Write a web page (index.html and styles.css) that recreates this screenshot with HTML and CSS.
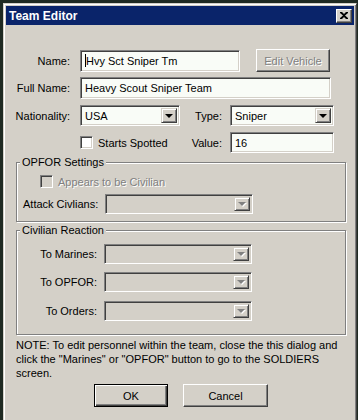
FILE: index.html
```html
<!DOCTYPE html>
<html lang="en">
<head>
    <meta charset="UTF-8">
    <meta name="viewport" content="width=device-width, initial-scale=1.0">
    <title>Team Editor</title>
<link rel="stylesheet" href="styles.css">
</head>
<body>
  <div class="window">
    <div class="titlebar">
      <span class="title">Team Editor</span>
      <span class="close">
        <svg width="8" height="7" viewBox="0 0 8 7"><path d="M0 0h2l2 2 2-2h2v1L5 3.5 8 6v1H6L4 5 2 7H0V6l3-2.5L0 1z" fill="#000"/></svg>
      </span>
    </div>

    <div class="body">
      <div class="row r1">
        <span class="lbl main">Name:</span>
        <div class="field w-name"><span class="caret"></span>Hvy Sct Sniper Tm</div>
        <div class="btn off edit">Edit Vehicle</div>
      </div>

      <div class="row r2">
        <span class="lbl main">Full Name:</span>
        <div class="field w-full">Heavy Scout Sniper Team</div>
      </div>

      <div class="row r3">
        <span class="lbl main">Nationality:</span>
        <div class="combo w-nat"><span class="val">USA</span><span class="arrow"><i></i></span></div>
        <span class="lbl side">Type:</span>
        <div class="combo w-side"><span class="val">Sniper</span><span class="arrow"><i></i></span></div>
      </div>

      <div class="row r4">
        <span class="lbl main"></span>
        <label class="check w-nat"><span class="box"></span>Starts Spotted</label>
        <span class="lbl side">Value:</span>
        <div class="field w-side">16</div>
      </div>

      <fieldset class="group g1">
        <legend>OPFOR Settings</legend>
        <label class="check off"><span class="box"></span>Appears to be Civilian</label>
        <div class="grow attack">
          <span class="glbl">Attack Civlians:</span>
          <div class="combo off w-grp"><span class="val"></span><span class="arrow"><i></i></span></div>
        </div>
      </fieldset>

      <fieldset class="group g2">
        <legend>Civilian Reaction</legend>
        <div class="grow first">
          <span class="glbl right">To Marines:</span>
          <div class="combo off w-grp"><span class="val"></span><span class="arrow"><i></i></span></div>
        </div>
        <div class="grow">
          <span class="glbl right">To OPFOR:</span>
          <div class="combo off w-grp"><span class="val"></span><span class="arrow"><i></i></span></div>
        </div>
        <div class="grow last">
          <span class="glbl right">To Orders:</span>
          <div class="combo off w-grp"><span class="val"></span><span class="arrow"><i></i></span></div>
        </div>
      </fieldset>

      <p class="note">NOTE: To edit personnel within the team, close the this dialog and<br>click the "Marines" or "OPFOR" button to go to the SOLDIERS<br>screen.</p>

      <div class="buttons">
        <div class="btn default ok">OK</div>
        <div class="btn cancel">Cancel</div>
      </div>
    </div>
  </div>
</body>
</html>
```

FILE: styles.css
```css
body {
  margin: 0;
  background: #1f2a22;
  font-family: "Liberation Sans", Arial, sans-serif;
  font-size: 11px;
  color: #000;
  overflow: hidden;
}

/* window frame */
.window {
  margin: 3px 0 0 3px;
  width: 350px;
  height: 430px;
  background: #d4d0c8;
  border: 1px solid;
  border-color: #d4d0c8 #404040 #404040 #d4d0c8;
  box-shadow: inset 1px 1px #fff, inset -1px -1px #808080;
  padding: 1px;
}
.titlebar {
  height: 19px;
  margin: 1px 0 0 1px;
  width: 348px;
  background: #0a246a;
  display: flex;
  align-items: center;
  justify-content: space-between;
}
.title {
  color: #fff;
  font-weight: bold;
  font-size: 12px;
  padding-left: 3px;
}
.close {
  width: 14px;
  height: 12px;
  margin-right: 2px;
  background: #d4d0c8;
  border: 1px solid;
  border-color: #fff #404040 #404040 #fff;
  box-shadow: inset -1px -1px #808080;
  display: flex;
  align-items: center;
  justify-content: center;
}

.body {
  padding-top: 24px;
}

/* form rows */
.row {
  display: flex;
  align-items: center;
}
.r1 { height: 23px; }
.r2 { height: 22px; margin-top: 5px; }
.r3 { height: 21px; margin-top: 6px; }
.r4 { height: 21px; margin-top: 6px; }

.lbl { text-align: right; }
.lbl.main { width: 65px; margin-right: 10px; }
.lbl.side { width: 42px; margin-right: 8px; }

.field, .combo {
  box-sizing: border-box;
  height: 100%;
  border: 1px solid;
  border-color: #808080 #fff #fff #808080;
  box-shadow: inset 1px 1px #404040, inset -1px -1px #d4d0c8;
  background: #f9fcf7;
  display: flex;
  align-items: center;
  padding-left: 4px;
}
.w-name { width: 160px; height: 22px; }
.w-full { width: 251px; }
.w-nat { width: 100px; }
.w-side { width: 104px; }
.w-grp { width: 148px; }

.caret {
  width: 1px;
  height: 13px;
  background: #000;
}

.combo { padding: 2px; }
.combo .val { flex: 1; padding-left: 2px; }
.combo .arrow {
  box-sizing: border-box;
  width: 16px;
  height: 100%;
  background: #d4d0c8;
  border: 1px solid;
  border-color: #d4d0c8 #404040 #404040 #d4d0c8;
  box-shadow: inset 1px 1px #fff, inset -1px -1px #808080;
  display: flex;
  align-items: center;
  justify-content: center;
}
.combo .arrow i {
  width: 0;
  height: 0;
  border-left: 4px solid transparent;
  border-right: 4px solid transparent;
  border-top: 4px solid #000;
}
.combo.off { background: #d4d0c8; }
.combo.off .arrow i {
  border-top-color: #808080;
  filter: drop-shadow(1px 1px 0 #fff);
}

/* checkbox */
.check {
  display: flex;
  align-items: center;
}
.check .box {
  box-sizing: border-box;
  width: 13px;
  height: 13px;
  margin-right: 5px;
  border: 1px solid;
  border-color: #808080 #fff #fff #808080;
  box-shadow: inset 1px 1px #404040, inset -1px -1px #d4d0c8;
  background: #fff;
}
.check.off { color: #808080; text-shadow: 1px 1px #fff; }
.check.off .box { background: #d4d0c8; }

/* buttons */
.btn {
  box-sizing: border-box;
  height: 23px;
  background: #d4d0c8;
  border: 1px solid;
  border-color: #fff #404040 #404040 #fff;
  box-shadow: inset -1px -1px #808080;
  display: flex;
  align-items: center;
  justify-content: center;
}
.btn.off { color: #808080; text-shadow: 1px 1px #fff; }
.edit { width: 74px; margin-left: 16px; }
.btn.default {
  border: 1px solid #000;
  box-shadow: inset 1px 1px #fff, inset -1px -1px #404040, inset -2px -2px #808080;
}

/* group boxes */
.group {
  margin: 0 0 0 11px;
  width: 330px;
  box-sizing: border-box;
  border: 1px solid #808080;
  box-shadow: inset 1px 1px #fff, 1px 1px #fff;
  padding: 0;
}
.group legend {
  padding: 0 2px;
  margin-left: 3px;
  background: #d4d0c8;
  line-height: 13px;
}
.g1 { margin-top: 3px; height: 66px; }
.g1 .check { margin: 6px 0 0 23px; }
.g1 .attack { margin-top: 6px; }
.g2 { margin-top: 2px; height: 111px; }
.g2 .grow { margin-top: 8px; }
.g2 .grow.first { margin-top: 7px; }
.g2 .grow.last { margin-top: 9px; }

.grow {
  display: flex;
  align-items: center;
  height: 20px;
}
.glbl { width: 80px; margin-left: 6px; margin-right: 2px; }
.glbl.right { text-align: right; width: 80px; margin-right: 7px; margin-left: 0; }

.note {
  margin: 3px 0 0 11px;
  line-height: 14px;
}

.buttons {
  display: flex;
  gap: 15px;
  margin: 4px 0 0 89px;
}
.ok { width: 74px; }
.cancel { width: 85px; }
```
